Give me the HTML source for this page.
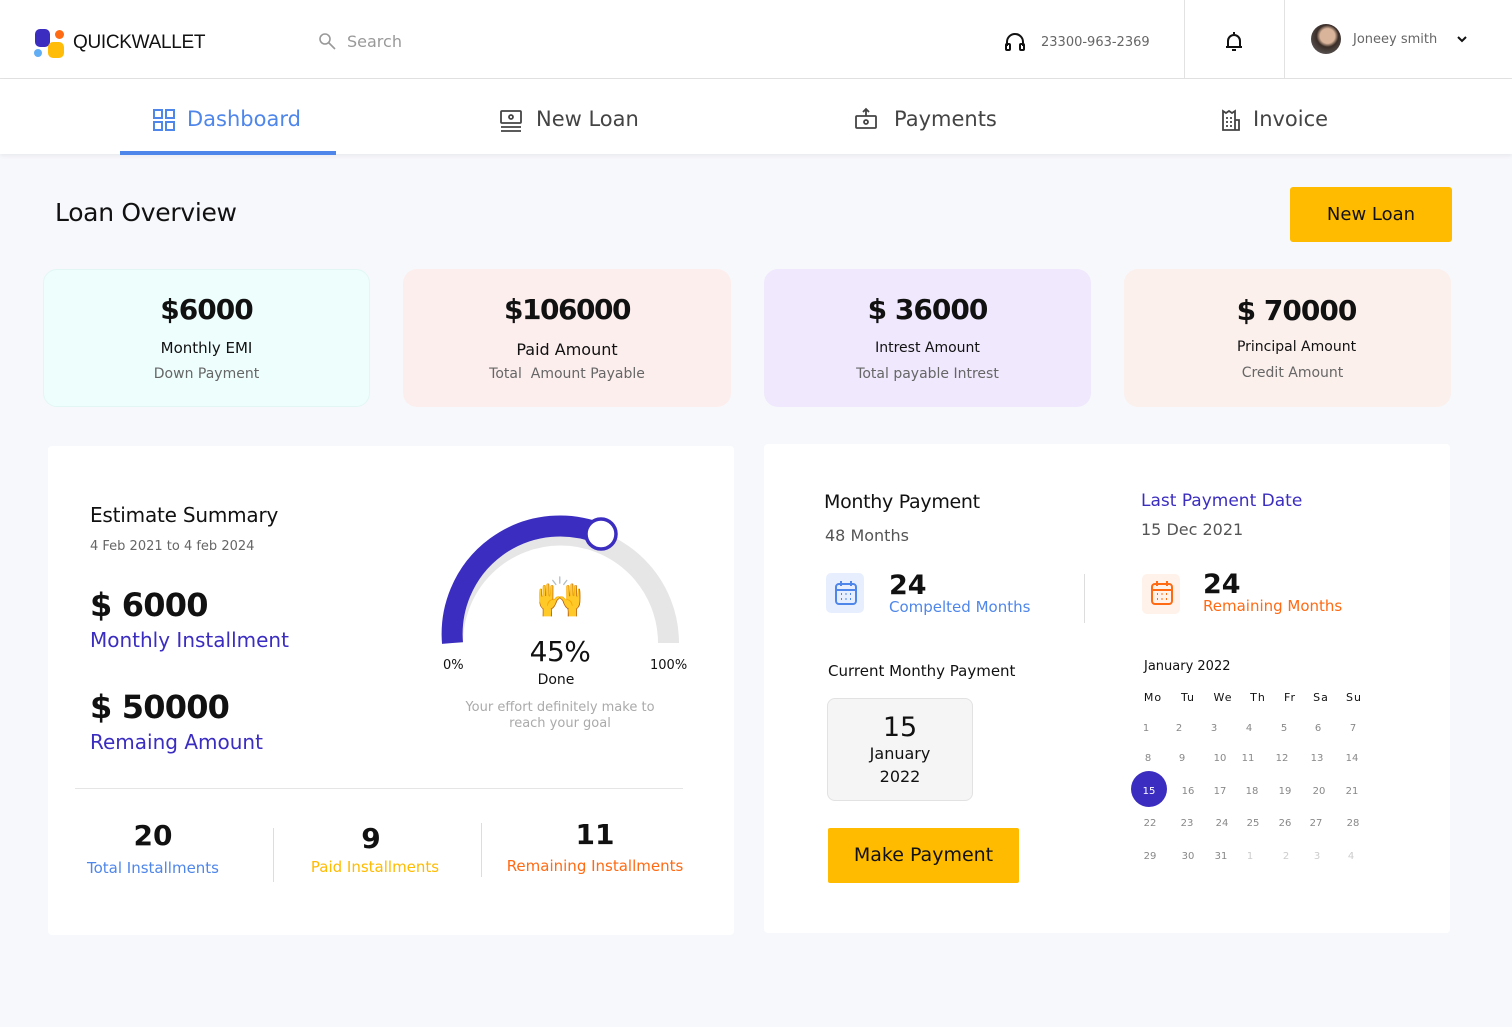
<!DOCTYPE html>
<html><head><meta charset="utf-8"><style>
*{margin:0;padding:0;box-sizing:border-box}
body{width:1512px;height:1027px;background:#f7f8fc;font-family:"DejaVu Sans","Liberation Sans",sans-serif;position:relative;overflow:hidden;color:#111}
.a{position:absolute;white-space:nowrap;line-height:1}
.c{text-align:center}
</style></head><body>
<!-- header -->
<div class="a" style="left:0;top:0;width:1512px;height:79px;background:#fff;border-bottom:1px solid #e2e2e2"></div>
<div class="a" style="left:35px;top:29px;width:15px;height:18px;border-radius:5px;background:#3b2dc0"></div>
<div class="a" style="left:55px;top:30px;width:9px;height:9px;border-radius:50%;background:#ff6a13"></div>
<div class="a" style="left:34px;top:49px;width:8px;height:8px;border-radius:50%;background:#62aef5"></div>
<div class="a" style="left:48px;top:42px;width:16px;height:16px;border-radius:5px;background:#ffbd0a"></div>
<div class="a" style="left:73px;top:33px;font-size:19px;font-family:'Liberation Sans',sans-serif;color:#111;letter-spacing:-0.3px">QUICKWALLET</div>
<svg class="a" style="left:318px;top:32px" width="20" height="20" viewBox="0 0 20 20" fill="none" stroke="#999" stroke-width="1.6"><circle cx="7" cy="7" r="5"/><path d="M11 11l6 6"/></svg>
<div class="a" style="left:347px;top:34px;font-size:16px;color:#999">Search</div>
<svg class="a" style="left:1004px;top:32px" width="22" height="20" viewBox="0 0 22 20" fill="none" stroke="#111" stroke-width="2"><path d="M3 14V10a8 8 0 0116 0v4"/><rect x="2" y="12" width="4" height="6" rx="1"/><rect x="16" y="12" width="4" height="6" rx="1"/></svg>
<div class="a" style="left:1041px;top:36px;font-size:13px;color:#666">23300-963-2369</div>
<div class="a" style="left:1184px;top:0;width:1px;height:78px;background:#e2e2e2"></div>
<div class="a" style="left:1284px;top:0;width:1px;height:78px;background:#e2e2e2"></div>
<svg class="a" style="left:1224px;top:30px" width="20" height="24" viewBox="0 0 20 24" fill="none" stroke="#111" stroke-width="2"><path d="M10 2v2M4 17V11a6 6 0 0112 0v6zM2 17h16M8 20h4"/></svg>
<div class="a" style="left:1311px;top:24px;width:30px;height:30px;border-radius:50%;background:radial-gradient(circle at 55% 40%,#d9b49a 0 30%,#3a2d28 45%,#6d6d6d 100%)"></div>
<div class="a" style="left:1353px;top:33px;font-size:13px;color:#666">Joneey smith</div>
<svg class="a" style="left:1456px;top:34px" width="12" height="10" viewBox="0 0 12 10" fill="none" stroke="#111" stroke-width="2"><path d="M2 3l4 4 4-4"/></svg>
<!-- nav -->
<div class="a" style="left:0;top:79px;width:1512px;height:75px;background:#fff;box-shadow:0 2px 4px rgba(0,0,0,0.06)"></div>
<svg class="a" style="left:153px;top:109px" width="22" height="22" viewBox="0 0 22 22" fill="none" stroke="#4f86ea" stroke-width="2"><rect x="1" y="1" width="8" height="8"/><rect x="13" y="1" width="8" height="8"/><rect x="1" y="13" width="8" height="8"/><rect x="13" y="13" width="8" height="8"/></svg>
<div class="a" style="left:187px;top:109px;font-size:21px;color:#4f86ea">Dashboard</div>
<div class="a" style="left:120px;top:151px;width:216px;height:4px;background:#4f86ea"></div>
<svg class="a" style="left:499px;top:109px" width="24" height="24" viewBox="0 0 24 24" fill="none" stroke="#444" stroke-width="1.8"><rect x="2" y="2" width="20" height="12" rx="1"/><circle cx="12" cy="8" r="2"/><path d="M2 18h20M2 22h20"/></svg>
<div class="a" style="left:536px;top:109px;font-size:21px;color:#444">New Loan</div>
<svg class="a" style="left:854px;top:107px" width="24" height="24" viewBox="0 0 24 24" fill="none" stroke="#444" stroke-width="1.8"><rect x="2" y="9" width="20" height="12" rx="1"/><circle cx="12" cy="15" r="2"/><path d="M12 2v7M9 5l3-3 3 3"/></svg>
<div class="a" style="left:894px;top:109px;font-size:21px;color:#444">Payments</div>
<svg class="a" style="left:1220px;top:108px" width="22" height="24" viewBox="0 0 22 24" fill="none" stroke="#444" stroke-width="1.8"><path d="M3 22V3l3 2 3-2 3 2 3-2v19zM15 12h4v10h-4"/><path d="M6 10h2M10 10h2M6 14h2M10 14h2M6 18h2M10 18h2"/></svg>
<div class="a" style="left:1253px;top:109px;font-size:21px;color:#444">Invoice</div>
<!-- overview -->
<div class="a" style="left:55px;top:200px;font-size:25px;color:#111;letter-spacing:-0.3px">Loan Overview</div>
<div class="a c" style="left:1290px;top:187px;width:162px;height:55px;background:#ffbb00;border-radius:3px;font-size:18px;line-height:55px">New Loan</div>

<div class="a" style="left:43px;top:269px;width:327px;height:138px;background:#eefefd;border:1px solid #e2f7f4;border-radius:14px"></div>
<div class="a c" style="left:43px;top:296px;width:327px;font-size:28px;font-weight:bold;letter-spacing:-1px">$6000</div>
<div class="a c" style="left:43px;top:341px;width:327px;font-size:15px">Monthly EMI</div>
<div class="a c" style="left:43px;top:367px;width:327px;font-size:14px;color:#666">Down Payment</div>

<div class="a" style="left:403px;top:269px;width:328px;height:138px;background:#fdeeee;border-radius:14px"></div>
<div class="a c" style="left:403px;top:296px;width:328px;font-size:28px;font-weight:bold;letter-spacing:-1.5px">$106000</div>
<div class="a c" style="left:403px;top:342px;width:328px;font-size:16px">Paid Amount</div>
<div class="a c" style="left:403px;top:367px;width:328px;font-size:14px;color:#666">Total&nbsp; Amount Payable</div>

<div class="a" style="left:764px;top:269px;width:327px;height:138px;background:#f0e8fd;border-radius:14px"></div>
<div class="a c" style="left:764px;top:296px;width:327px;font-size:28px;font-weight:bold;letter-spacing:-1px">$ 36000</div>
<div class="a c" style="left:764px;top:341px;width:327px;font-size:14px">Intrest Amount</div>
<div class="a c" style="left:764px;top:367px;width:327px;font-size:14px;color:#666">Total payable Intrest</div>

<div class="a" style="left:1124px;top:269px;width:327px;height:138px;background:#fbf0ec;border-radius:14px"></div>
<div class="a c" style="left:1124px;top:297px;width:345px;font-size:28px;font-weight:bold;letter-spacing:-1px">$ 70000</div>
<div class="a c" style="left:1124px;top:340px;width:345px;font-size:14px">Principal Amount</div>
<div class="a c" style="left:1124px;top:366px;width:337px;font-size:14px;color:#666">Credit Amount</div>

<!-- left panel -->
<div class="a" style="left:48px;top:446px;width:686px;height:489px;background:#fff;border-radius:4px"></div>
<div class="a" style="left:90px;top:505px;font-size:20px;letter-spacing:-0.2px">Estimate Summary</div>
<div class="a" style="left:90px;top:540px;font-size:13px;color:#666">4 Feb 2021 to 4 feb 2024</div>
<div class="a" style="left:90px;top:589px;font-size:32px;font-weight:bold;letter-spacing:-0.8px">$ 6000</div>
<div class="a" style="left:90px;top:630px;font-size:20px;color:#3b2dc0">Monthly Installment</div>
<div class="a" style="left:90px;top:691px;font-size:32px;font-weight:bold;letter-spacing:-0.8px">$ 50000</div>
<div class="a" style="left:90px;top:732px;font-size:20px;color:#3b2dc0">Remaing Amount</div>

<svg class="a" style="left:430px;top:505px" width="270" height="150" viewBox="430 505 270 150">
<path d="M452.5 643 A108 108 0 0 1 668.5 643" fill="none" stroke="#e6e6e6" stroke-width="21"/>
<path d="M452.5 643 A108 108 0 0 1 601 534" fill="none" stroke="#3b2dc0" stroke-width="21"/>
<circle cx="601" cy="534" r="15" fill="#fff" stroke="#3b2dc0" stroke-width="3.5"/>
</svg>
<div class="a c" style="left:520px;top:578px;width:80px;font-size:40px;font-family:'Noto Color Emoji','DejaVu Sans',sans-serif">🙌</div>
<div class="a c" style="left:500px;top:638px;width:120px;font-size:28px;letter-spacing:-0.5px">45%</div>
<div class="a" style="left:443px;top:659px;font-size:13px">0%</div>
<div class="a" style="left:650px;top:659px;font-size:13px">100%</div>
<div class="a c" style="left:500px;top:673px;width:112px;font-size:14px">Done</div>
<div class="a c" style="left:450px;top:700px;width:220px;font-size:13px;color:#aaa;line-height:1.2;white-space:normal">Your effort definitely make to reach your goal</div>

<div class="a" style="left:75px;top:788px;width:608px;height:1px;background:#e5e5e5"></div>
<div class="a" style="left:273px;top:828px;width:1px;height:54px;background:#ddd"></div>
<div class="a" style="left:481px;top:823px;width:1px;height:54px;background:#ddd"></div>
<div class="a c" style="left:73px;top:822px;width:160px;font-size:28px;font-weight:bold">20</div>
<div class="a c" style="left:73px;top:861px;width:160px;font-size:15px;color:#4f86ea">Total Installments</div>
<div class="a c" style="left:291px;top:825px;width:160px;font-size:28px;font-weight:bold">9</div>
<div class="a c" style="left:291px;top:860px;width:168px;font-size:15px;color:#ffbb00">Paid Installments</div>
<div class="a c" style="left:495px;top:821px;width:200px;font-size:28px;font-weight:bold">11</div>
<div class="a c" style="left:495px;top:859px;width:200px;font-size:15px;color:#ff6a13">Remaining Installments</div>

<!-- right panel -->
<div class="a" style="left:764px;top:444px;width:686px;height:489px;background:#fff;border-radius:4px"></div>
<div class="a" style="left:824px;top:493px;font-size:19px;letter-spacing:-0.3px">Monthy Payment</div>
<div class="a" style="left:825px;top:528px;font-size:16px;color:#555">48 Months</div>
<div class="a" style="left:1141px;top:493px;font-size:17px;color:#3b2dc0">Last Payment Date</div>
<div class="a" style="left:1141px;top:522px;font-size:16px;color:#555">15 Dec 2021</div>

<div class="a" style="left:826px;top:573px;width:38px;height:40px;border-radius:5px;background:#e7efff"></div>
<svg class="a" style="left:834px;top:580px" width="24" height="26" viewBox="0 0 24 26" fill="none" stroke="#4f86ea" stroke-width="2"><rect x="2" y="4" width="20" height="20" rx="3"/><path d="M2 10h20M7 1v5M17 1v5"/><path d="M7 14h1M11.5 14h1M16 14h1M7 19h1M11.5 19h1M16 19h1" stroke-width="2"/></svg>
<div class="a" style="left:889px;top:572px;font-size:27px;font-weight:bold">24</div>
<div class="a" style="left:889px;top:600px;font-size:15px;color:#4f86ea">Compelted Months</div>
<div class="a" style="left:1084px;top:574px;width:1px;height:49px;background:#ddd"></div>
<div class="a" style="left:1142px;top:574px;width:38px;height:40px;border-radius:5px;background:#fff2ea"></div>
<svg class="a" style="left:1150px;top:580px" width="24" height="26" viewBox="0 0 24 26" fill="none" stroke="#ff6a13" stroke-width="2"><rect x="2" y="4" width="20" height="20" rx="3"/><path d="M2 10h20M7 1v5M17 1v5"/><path d="M7 14h1M11.5 14h1M16 14h1M7 19h1M11.5 19h1M16 19h1" stroke-width="2"/></svg>
<div class="a" style="left:1203px;top:571px;font-size:27px;font-weight:bold">24</div>
<div class="a" style="left:1203px;top:599px;font-size:15px;color:#ff6a13">Remaining Months</div>

<div class="a" style="left:828px;top:664px;font-size:15px">Current Monthy Payment</div>
<div class="a" style="left:827px;top:698px;width:146px;height:103px;background:#f5f5f5;border:1px solid #e2e2e2;border-radius:8px"></div>
<div class="a c" style="left:827px;top:714px;width:146px;font-size:27px">15</div>
<div class="a c" style="left:827px;top:746px;width:146px;font-size:16px">January</div>
<div class="a c" style="left:827px;top:769px;width:146px;font-size:16px">2022</div>
<div class="a c" style="left:828px;top:828px;width:191px;height:55px;background:#ffbb00;border-radius:2px;font-size:19px;line-height:55px">Make Payment</div>

<div class="a" style="left:1144px;top:660px;font-size:13px">January 2022</div>
<div class="a" style="left:1131px;top:771px;width:36px;height:36px;border-radius:50%;background:#3b2dc0"></div>
<svg class="a" style="left:1120px;top:680px" width="260" height="190" viewBox="1120 680 260 190" font-family="DejaVu Sans, sans-serif" font-size="10" text-anchor="middle">
<g font-size="11" fill="#111" letter-spacing="1"><text x="1153" y="701">Mo</text><text x="1188" y="701">Tu</text><text x="1223" y="701">We</text><text x="1258" y="701">Th</text><text x="1290" y="701">Fr</text><text x="1321" y="701">Sa</text><text x="1354" y="701">Su</text></g>
<g fill="#888">
<text x="1146" y="731">1</text><text x="1179" y="731">2</text><text x="1214" y="731">3</text><text x="1249" y="731">4</text><text x="1284" y="731">5</text><text x="1318" y="731">6</text><text x="1353" y="731">7</text>
<text x="1148" y="761">8</text><text x="1182" y="761">9</text><text x="1220" y="761">10</text><text x="1248" y="761">11</text><text x="1282" y="761">12</text><text x="1317" y="761">13</text><text x="1352" y="761">14</text>
<text x="1149" y="794" fill="#fff">15</text><text x="1188" y="794">16</text><text x="1220" y="794">17</text><text x="1252" y="794">18</text><text x="1285" y="794">19</text><text x="1319" y="794">20</text><text x="1352" y="794">21</text>
<text x="1150" y="826">22</text><text x="1187" y="826">23</text><text x="1222" y="826">24</text><text x="1253" y="826">25</text><text x="1285" y="826">26</text><text x="1316" y="826">27</text><text x="1353" y="826">28</text>
<text x="1150" y="859">29</text><text x="1188" y="859">30</text><text x="1221" y="859">31</text></g>
<g fill="#ccc"><text x="1250" y="859">1</text><text x="1286" y="859">2</text><text x="1317" y="859">3</text><text x="1351" y="859">4</text></g>
</svg>
</body></html>
